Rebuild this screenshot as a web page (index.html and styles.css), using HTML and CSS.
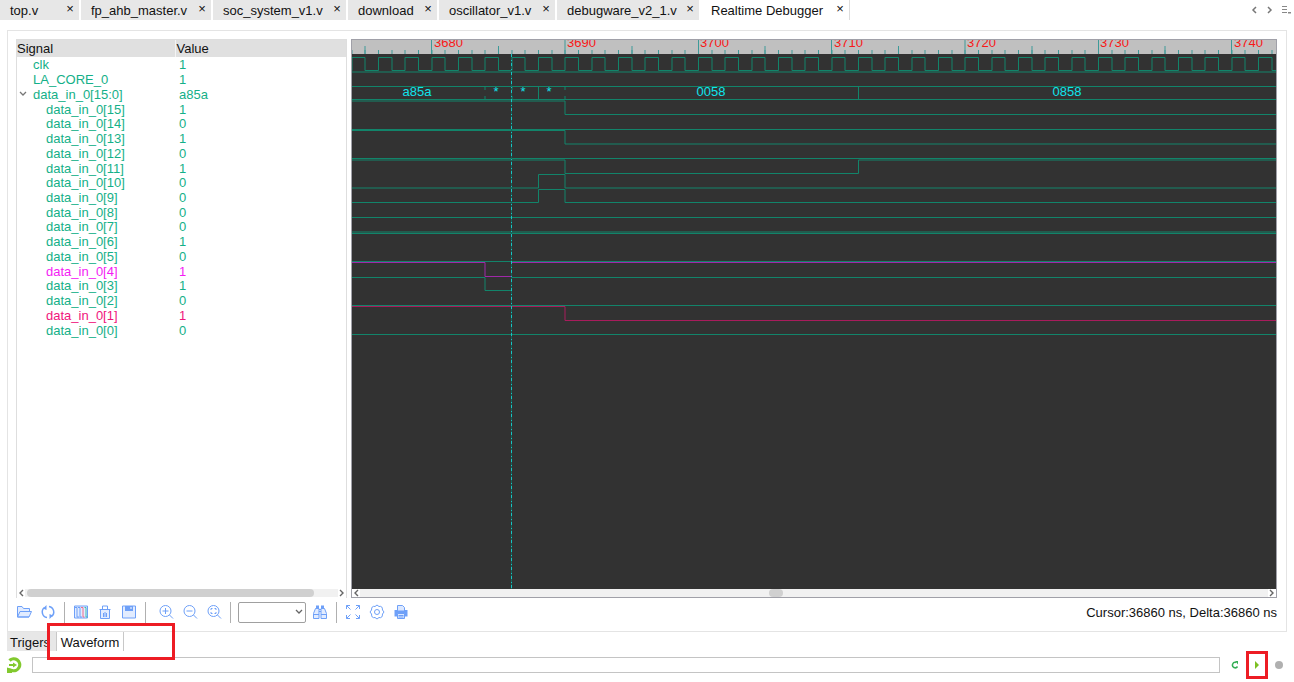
FILE: index.html
```html
<!DOCTYPE html>
<html lang="en">
<head>
<meta charset="utf-8">
<title>Realtime Debugger</title>
<link rel="stylesheet" href="styles.css">
</head>
<body>
<nav class="doc-tabs" aria-label="Open documents">
  <div class="tab-list">
    <div class="tab"><a href="#">top.v</a><button aria-label="Close top.v">×</button></div>
    <div class="tab"><a href="#">fp_ahb_master.v</a><button aria-label="Close fp_ahb_master.v">×</button></div>
    <div class="tab"><a href="#">soc_system_v1.v</a><button aria-label="Close soc_system_v1.v">×</button></div>
    <div class="tab"><a href="#">download</a><button aria-label="Close download">×</button></div>
    <div class="tab"><a href="#">oscillator_v1.v</a><button aria-label="Close oscillator_v1.v">×</button></div>
    <div class="tab"><a href="#">debugware_v2_1.v</a><button aria-label="Close debugware_v2_1.v">×</button></div>
    <div class="tab active"><a href="#">Realtime Debugger</a><button aria-label="Close Realtime Debugger">×</button></div>
  </div>
  <div class="tab-nav">
    <button aria-label="Previous tab"><svg width="8" height="8"><path d="M6 1 3 4l3 3" fill="none" stroke="#777" stroke-width="1.5"/></svg></button>
    <button aria-label="Next tab"><svg width="8" height="8"><path d="m2 1 3 3-3 3" fill="none" stroke="#777" stroke-width="1.5"/></svg></button>
    <button aria-label="Tab list"><svg width="10" height="8"><path d="M0 .5h5M0 3.500h5M0 6.500h5" stroke="#888"/><path d="M6 6h3v1.500H6z" fill="#888"/></svg></button>
  </div>
</nav>

<main class="panel">
  <div class="split">
    <section class="tree">
      <table>
        <colgroup><col class="col-name"><col></colgroup>
        <thead><tr><th>Signal</th><th>Value</th></tr></thead>
        <tbody>
          <tr><td>clk</td><td>1</td></tr>
          <tr><td>LA_CORE_0</td><td>1</td></tr>
          <tr><td class="group"><button aria-label="Collapse data_in_0"><svg width="8" height="6"><path d="m1 1 3 3 3-3" fill="none" stroke="#777" stroke-width="1.3"/></svg></button>data_in_0[15:0]</td><td>a85a</td></tr>
          <tr class="bit"><td>data_in_0[15]</td><td>1</td></tr>
          <tr class="bit"><td>data_in_0[14]</td><td>0</td></tr>
          <tr class="bit"><td>data_in_0[13]</td><td>1</td></tr>
          <tr class="bit"><td>data_in_0[12]</td><td>0</td></tr>
          <tr class="bit"><td>data_in_0[11]</td><td>1</td></tr>
          <tr class="bit"><td>data_in_0[10]</td><td>0</td></tr>
          <tr class="bit"><td>data_in_0[9]</td><td>0</td></tr>
          <tr class="bit"><td>data_in_0[8]</td><td>0</td></tr>
          <tr class="bit"><td>data_in_0[7]</td><td>0</td></tr>
          <tr class="bit"><td>data_in_0[6]</td><td>1</td></tr>
          <tr class="bit"><td>data_in_0[5]</td><td>0</td></tr>
          <tr class="bit magenta"><td>data_in_0[4]</td><td>1</td></tr>
          <tr class="bit"><td>data_in_0[3]</td><td>1</td></tr>
          <tr class="bit"><td>data_in_0[2]</td><td>0</td></tr>
          <tr class="bit crimson"><td>data_in_0[1]</td><td>1</td></tr>
          <tr class="bit"><td>data_in_0[0]</td><td>0</td></tr>
        </tbody>
      </table>
      <div class="scroll">
        <button aria-label="Scroll left"><svg width="6" height="8"><path d="M5 1 2 4l3 3" fill="none" stroke="#666" stroke-width="1.4"/></svg></button>
        <div class="track"><div class="thumb"></div></div>
        <button aria-label="Scroll right"><svg width="6" height="8"><path d="m1 1 3 3-3 3" fill="none" stroke="#666" stroke-width="1.4"/></svg></button>
      </div>
    </section>

    <section class="wave">
      <svg class="ruler" aria-label="Time ruler">
        <defs>
          <pattern id="minor" x="6" y="0" width="80" height="14" patternUnits="userSpaceOnUse">
            <path d="M7 10v4M20.500 10v4M34 10v4M47 10v4M60.500 10v4M74 10v4" stroke="#3d9a98"/>
          </pattern>
          <pattern id="major" x="6" y="0" width="400" height="14" patternUnits="userSpaceOnUse">
            <path d="M7 6v8M140.500 6v8M274 6v8M73.500 0v14M207 0v14M340.500 0v14" stroke="#3d9a98"/>
          </pattern>
        </defs>
        <rect width="100%" height="14" fill="url(#minor)"/>
        <rect width="100%" height="14" fill="url(#major)"/>
        <g fill="#f81818">
          <text x="82" y="7">3680</text><text x="215" y="7">3690</text><text x="348" y="7">3700</text><text x="482" y="7">3710</text><text x="615" y="7">3720</text><text x="748" y="7">3730</text><text x="882" y="7">3740</text>
        </g>
      </svg>
      <svg class="traces" aria-label="Waveforms">
        <defs>
          <pattern id="clock" x="6" y="3" width="80" height="16" patternUnits="userSpaceOnUse">
            <path d="M0 .5H7V13.500H20.500V.5H34V13.500H47V.5H60.500V13.500H74V.5H80" fill="none" stroke="#12846a"/>
          </pattern>
        </defs>
        <rect y="3" width="100%" height="16" fill="url(#clock)"/>
        <g fill="none" stroke="#12846a">
          <path d="M0 18H4000"/>
          <path d="M0 32.500H4000M0 45.500H4000"/>
          <path d="M133 32v4M133 42v4M160 32v4M160 42v4M186.500 32v14M213 32v4M213 42v4M506.500 32v14"/>
          <path d="M0 47H213V60.500H4000"/>
          <path d="M0 75.500H4000"/>
          <path d="M0 76.500H213V90H4000"/>
          <path d="M0 104.500H4000"/>
          <path d="M0 106H213V119.500H506.500V106H4000"/>
          <path d="M0 134H186.500V120.500H213V134H4000"/>
          <path d="M0 148.500H186.500V135.500H213V148.500H4000"/>
          <path d="M0 163.500H4000"/>
          <path d="M0 178H4000"/>
          <path d="M0 179.500H4000"/>
          <path d="M0 207.500H4000"/>
          <path d="M0 223.500H133V236.500H159.500V223.500H4000"/>
          <path d="M0 251.500H4000"/>
          <path d="M0 280.500H4000"/>
          <path d="M0 208.500H133V222.500H159.500V208.500H4000" stroke="#a028a8"/>
          <path d="M0 252.500H213V266.500H4000" stroke="#a81c5c"/>
        </g>
        <path d="M159.500 0V2000" stroke="#14645c"/>
        <path d="M159.500 0V2000" stroke="#18c4c4" stroke-dasharray="3 3 1 2"/>
        <g class="values" text-anchor="middle">
          <text x="65" y="42">a85a</text><text x="144" y="42">*</text><text x="171" y="42">*</text><text x="197" y="42">*</text><text x="359" y="42">0058</text><text x="715" y="42">0858</text>
        </g>
      </svg>
      <div class="scroll">
        <button aria-label="Scroll left"><svg width="6" height="8"><path d="M5 1 2 4l3 3" fill="none" stroke="#666" stroke-width="1.4"/></svg></button>
        <div class="track"><div class="thumb"></div></div>
        <button aria-label="Scroll right"><svg width="6" height="8"><path d="m1 1 3 3-3 3" fill="none" stroke="#666" stroke-width="1.4"/></svg></button>
      </div>
    </section>
  </div>

  <div class="toolbar" role="toolbar" aria-label="Waveform tools">
    <button aria-label="Open"><svg viewBox="0 0 16 16"><path class="tint" d="M1.500 13V2.500h4.500l1.500 2h6v3M1.500 13l2.500-5.500h11.500L13 13z"/><path d="M1.500 13H13"/></svg></button>
    <button aria-label="Reload"><svg viewBox="0 0 16 16"><path d="M9 2.500A5.600 5.600 0 0 1 11.500 12.500M7 13.500A5.600 5.600 0 0 1 4.500 3.500" stroke-width="1.500"/><path class="solid" d="M3 4.500 6.500 1v5zM13 11.500 9.500 15v-5z"/></svg></button>
    <span class="sep"></span>
    <button aria-label="Signals"><svg viewBox="0 0 16 16"><path class="tint" d="M1.500 2h13v12h-13z"/><path d="M1.500 3.500H4V13h2M5 3.500h2V13h2"/><path d="M8 3.500h2V13h1.500" stroke="#f06c8c"/><path d="M11.500 3.500h1.500V13h1.500" stroke="#3cbcb4"/></svg></button>
    <button aria-label="Clear"><svg viewBox="0 0 16 16"><path class="tint" d="M3.500 5.500h9v9h-9z"/><path d="M2.500 5.500h11M5.500 5V2h5v3M6.500 9v4M8 8v5M9.500 9v4"/></svg></button>
    <button aria-label="Save"><svg viewBox="0 0 16 16"><path class="tint" d="M1.500 2v12h13V2z"/><path class="solid" d="M4 2h8v5H4z"/><path d="M10 3v2" stroke="#fff"/></svg></button>
    <span class="sep wide"></span>
    <button aria-label="Zoom in"><svg viewBox="0 0 16 16"><circle cx="7.500" cy="7" r="5.500"/><path d="m11.500 11 3.500 3.500M4.500 7h6M7.500 4v6"/></svg></button>
    <button aria-label="Zoom out"><svg viewBox="0 0 16 16"><circle cx="7.500" cy="7" r="5.500"/><path d="m11.500 11 3.500 3.500M4.500 7h6"/></svg></button>
    <button aria-label="Zoom to fit"><svg viewBox="0 0 16 16"><circle cx="7.500" cy="7" r="5.500"/><path d="m11.500 11 3.500 3.500M5 6V4.500h1.500M8.500 4.500H10V6M10 8v1.500H8.500M6.500 9.500H5V8"/></svg></button>
    <span class="sep"></span>
    <div class="picker"><select aria-label="Search signal"><option></option></select><svg width="8" height="6"><path d="m1 1 3 3 3-3" fill="none" stroke="#666" stroke-width="1.300"/></svg></div>
    <button aria-label="Find"><svg viewBox="0 0 16 16"><path class="tint" d="M1.500 14.500V9.500L3.500 4.500H7v10zM9 14.500v-10h3.500l2 5v5z"/><path d="M7 5.500h2M7 7.500h2M1.500 10.500H7M9 10.500h5.500"/><path class="solid" d="M4 1.500h3v3H4zM9 1.500h3v3H9z"/></svg></button>
    <span class="sep"></span>
    <button aria-label="Full screen"><svg viewBox="0 0 16 16"><path d="M1.500 5V1.500H5M1.500 1.500l4 4M11 1.500h3.500V5M14.500 1.500l-4 4M14.500 11v3.500H11M14.500 14.500l-4-4M5 14.500H1.500V11M1.500 14.500l4-4"/></svg></button>
    <button aria-label="Settings"><svg viewBox="0 0 16 16"><path d="M6 2.500Q8-.5 10 2.500 13.500 1.500 13.500 6 16.500 8 13.500 10 13.500 14.500 10 13.500 8 16.500 6 13.500 2.500 14.500 2.500 10-.5 8 2.500 6 2.500 1.500 6 2.500z" stroke-linejoin="round"/><circle cx="8" cy="8" r="2.500"/></svg></button>
    <button aria-label="Print"><svg viewBox="0 0 16 16"><path class="solid" d="M1.500 6h13v6.500h-13z"/><path class="paper" d="M4.500 7V1.500h5l2 2V7z"/><path class="paper" d="M4.500 9.500h7v5h-7z"/><path d="M5.500 11.500h5M5.500 13h5"/></svg></button>
    <output class="readout">Cursor:36860 ns, Delta:36860 ns</output>
  </div>
</main>

<nav class="view-tabs" aria-label="Views">
  <button class="view">Trigers</button>
  <div class="marked"><button class="view current">Waveform</button><span class="mark mark-tab"></span></div>
</nav>

<footer class="status">
  <button class="sync" aria-label="Synchronise"><svg width="16" height="16" viewBox="0 0 16 16"><path d="M2.500 3.500A6 6 0 1 1 5 13.500L1.500 13" fill="none" stroke="#82c92e" stroke-width="3.200"/><path d="M0 10.500 5 12v4H0z" fill="#82c92e"/><path d="M2 8h4" stroke="#82c92e" stroke-width="2"/><path d="m6 5.500 4 2.500-4 2.500z" fill="#82c92e"/></svg></button>
  <input type="text" aria-label="Command">
  <div class="run">
    <button aria-label="Refresh"><svg width="8" height="8"><path d="M5 1.500A2.700 2.700 0 1 0 6.500 5.500" fill="none" stroke="#35ae55" stroke-width="1.500"/><path d="M4 0h3v3.500z" fill="#35ae55"/></svg></button>
    <div class="marked"><button aria-label="Run"><svg width="8" height="8"><path d="m2 0 4 4-4 4z" fill="#7cc022"/></svg></button><span class="mark mark-run"></span></div>
    <button aria-label="Stop"><svg width="8" height="8"><circle cx="4" cy="4" r="4" fill="#b0b0b0"/></svg></button>
  </div>
</footer>
</body>
</html>
```
FILE: styles.css
```css
* { box-sizing: border-box; }

body {
  margin: 0;
  min-height: 100vh;
  display: flex;
  flex-direction: column;
  background: #fff;
  color: #111;
  font: 13px/16px "Liberation Sans", Arial, sans-serif;
}

button {
  display: flex;
  align-items: center;
  justify-content: center;
  padding: 0;
  border: 0;
  background: none;
  color: inherit;
  font: inherit;
}

.doc-tabs {
  display: flex;
  justify-content: space-between;
  height: 20px;
  margin-bottom: 10px;
}

.tab-list {
  display: grid;
  grid-template-columns: 79px 130px 133px 89px 116px 142px 149px;
  gap: 2px;
}

.tab {
  display: flex;
  justify-content: space-between;
  padding: 3px 4px 1px 10px;
  background: #e7e7e7;
}
.tab a { color: #111; text-decoration: none; }
.tab button { width: 10px; height: 12px; }
.tab.active { background: #fff; border-right: 1px solid #ddd; }

.tab-nav { display: flex; gap: 8px; padding: 0 2px 0 0; }

.panel {
  flex: 1;
  display: flex;
  flex-direction: column;
  margin: 0 7px;
  padding: 8px 9px 0 8px;
  border: 1px solid #e4e4e4;
}

.split {
  flex: 1;
  display: grid;
  grid-template-columns: 331px 1fr;
  gap: 4px;
}

.tree {
  display: flex;
  flex-direction: column;
  justify-content: space-between;
  border: 1px solid #dedede;
  border-bottom: 0;
}

table {
  width: 100%;
  height: 297px;
  table-layout: fixed;
  border-collapse: collapse;
  color: #14b088;
}
.col-name { width: 158px; }
th {
  height: 17px;
  padding: 0 1px;
  background: #e0e0e0;
  color: #111;
  font-weight: 400;
  text-align: left;
}
th:first-child { padding-left: 0; }
th + th { border-left: 1px solid #f4f4f4; }
td { padding: 1px 0 0 16px; line-height: 13px; }
td + td, .bit td + td { padding-left: 4px; }
.bit td { padding-left: 29px; }
.group button { float: left; width: 12px; height: 13px; margin-left: -16px; margin-right: 4px; }
.magenta { color: #f41cf4; }
.crimson { color: #f0147c; }

.scroll {
  display: flex;
  align-items: center;
  height: 10px;
  background: #fff;
}
.scroll button { width: 8px; }
.track { flex: 1; padding: 0 2px; background: #f1f1f1; }
.thumb { width: 93%; height: 8px; border-radius: 4px; background: #d0d0d0; }

.wave {
  display: flex;
  flex-direction: column;
  min-width: 0;
  border: 1px solid #a0a0a8;
}
.wave .track { padding: 0; }
.wave .thumb { width: 14px; margin-left: 45%; }
.wave .scroll { height: 8px; }

.ruler {
  display: block;
  width: 100%;
  height: 14px;
  background: #c0c0c0;
}
.traces {
  display: block;
  flex: 1;
  width: 100%;
  min-height: 290px;
  background: #323232;
}
.values { fill: #10e4ec; }

.toolbar {
  display: flex;
  align-items: center;
  height: 33px;
  margin-left: -4px;
  padding-bottom: 5px;
}
.toolbar button { width: 24px; height: 24px; }
.toolbar button svg {
  width: 16px;
  height: 16px;
  fill: none;
  stroke: #6ea0f8;
}
.toolbar .solid { fill: #6ea0f8; stroke: none; }
.toolbar .tint { fill: #e2ecff; }
.toolbar .paper { fill: #dce8ff; }
.sep { width: 1px; height: 21px; margin: 0 4px; background: #b0b0b0; }
.sep.wide { margin-right: 8px; }

.picker {
  display: grid;
  align-items: center;
  margin: 0 2px 0 3px;
}
.picker > * { grid-area: 1 / 1; }
.picker svg { justify-self: end; margin-right: 3px; pointer-events: none; }
select {
  appearance: none;
  width: 68px;
  height: 21px;
  border: 1px solid #a0a0a0;
  border-radius: 2px;
  background: #fff;
}
.readout { margin-left: auto; padding-top: 2px; }

.view-tabs {
  display: flex;
  height: 19px;
  padding-left: 7px;
}
.view {
  height: 19px;
  padding: 2px 3px 0;
  background: #e7e7e7;
}
.view-tabs > .view { width: 49px; justify-content: flex-start; }
.view.current {
  width: 68px;
  border: 1px solid #c8c8c8;
  border-width: 0 1px;
  background: #fff;
}

.marked { position: relative; }
.mark {
  position: absolute;
  border: 3px solid #ed1c24;
  pointer-events: none;
}
.mark-tab { left: -9px; top: -9px; width: 128px; height: 37px; }
.mark-run { left: -7px; top: -10px; width: 22px; height: 28px; }

.status {
  display: flex;
  align-items: center;
  gap: 9px;
  height: 16px;
  margin: 6px 11px 9px 7px;
}
.status input {
  flex: 1;
  min-width: 0;
  height: 16px;
  border: 1px solid #c4c4c4;
  background: #fff;
}
.run { display: flex; gap: 14px; padding-left: 2px; }
```
